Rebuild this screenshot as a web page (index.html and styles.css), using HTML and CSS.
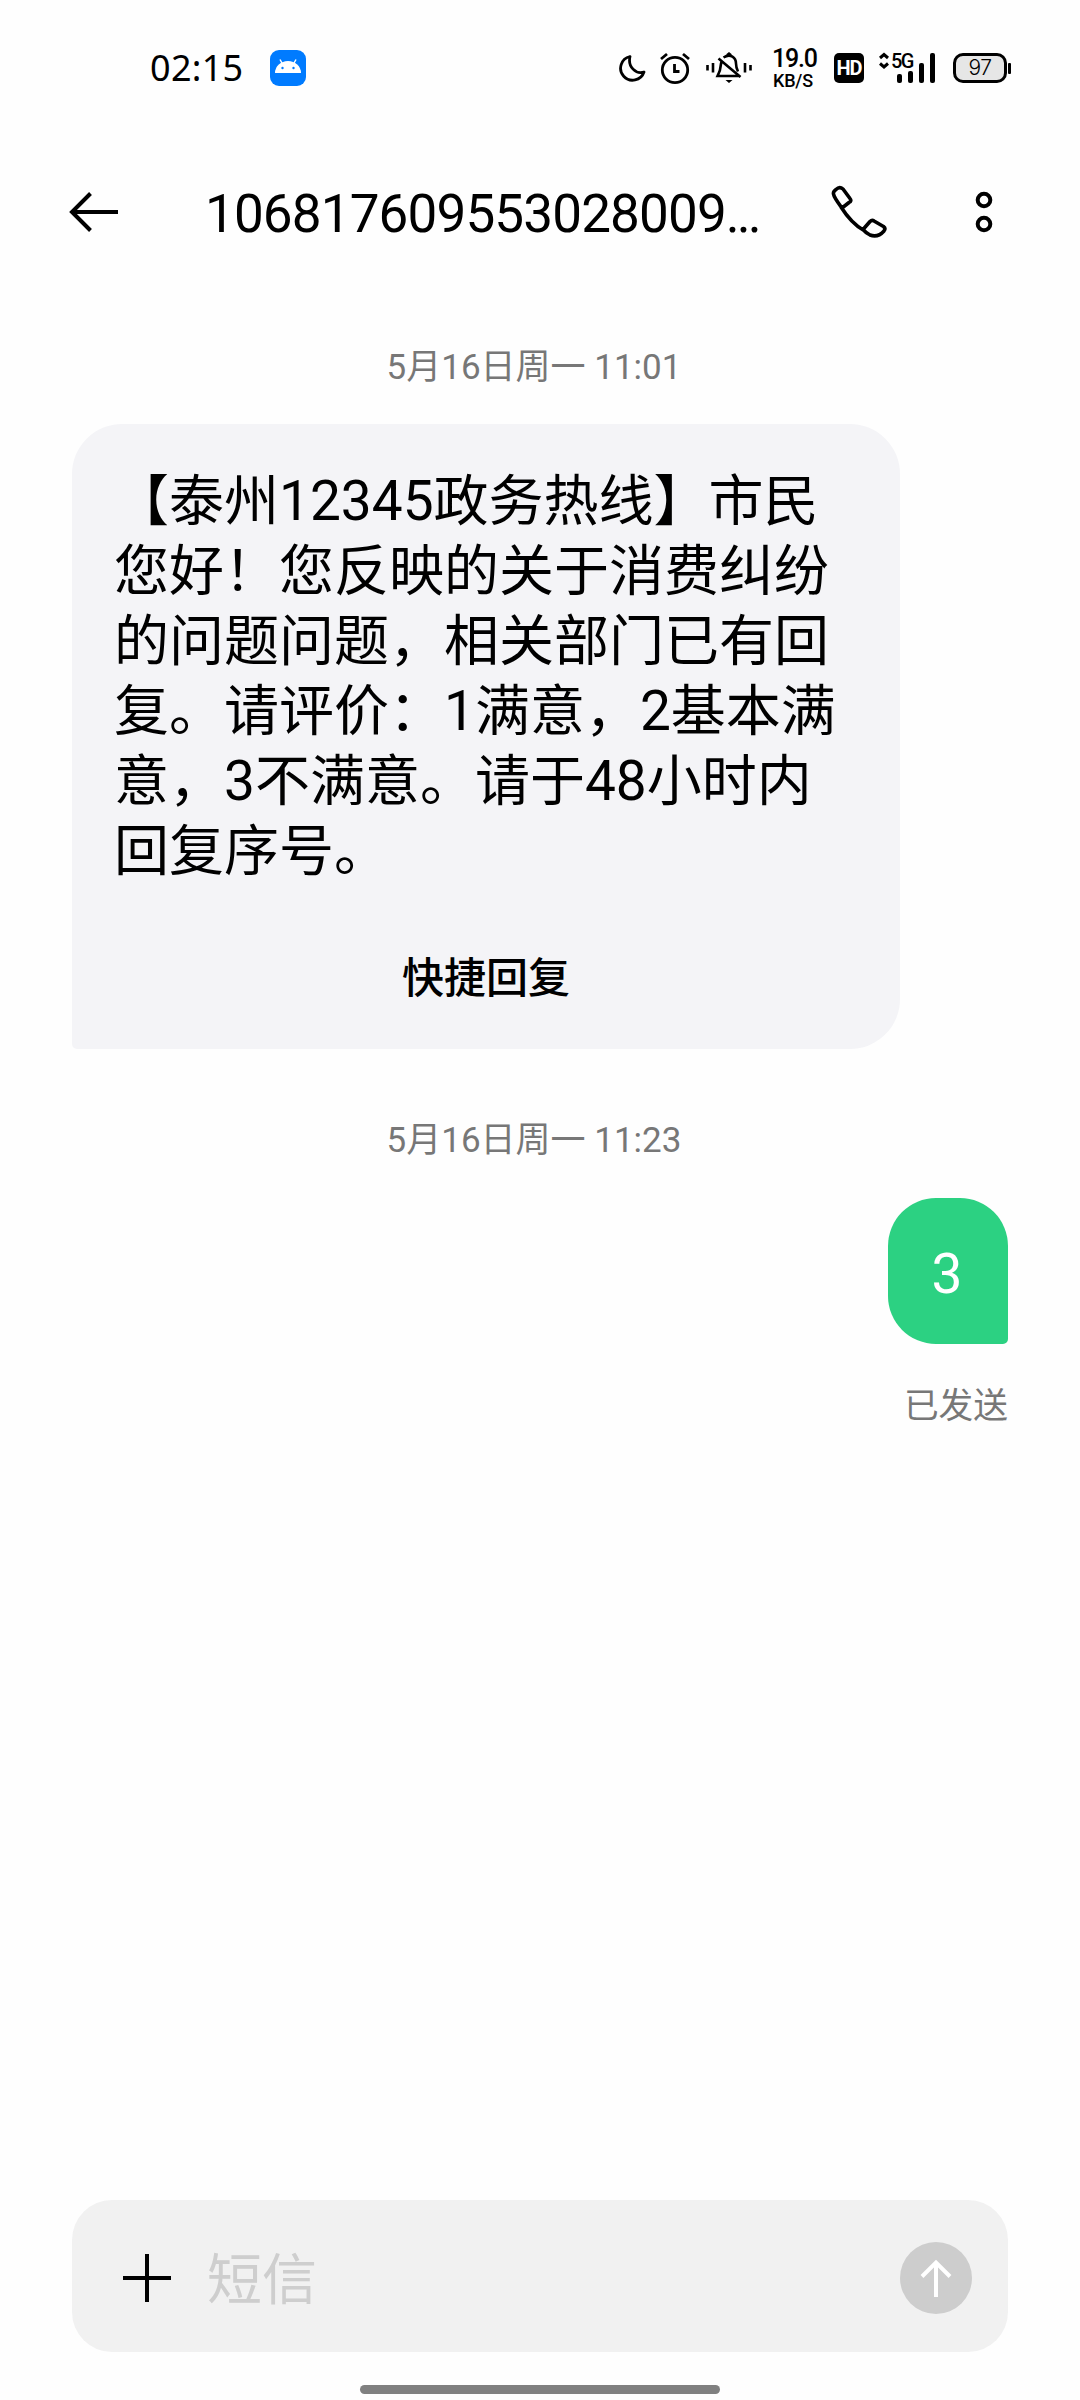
FILE: index.html
```html
<!DOCTYPE html>
<html lang="zh-CN">
<head>
<meta charset="utf-8">
<title>短信</title>
<link rel="stylesheet" href="styles.css">
</head>
<body>
<div class="screen">
  <div class="status">
    <span class="clock">02:15</span>
    <svg class="app" width="36" height="36" viewBox="0 0 36 36"><rect width="36" height="36" rx="9" fill="#007bff"/><path d="M5 23a13 12 0 0 1 26 0z" fill="#fff"/><path d="M12.500 14l-2.500-4.500M23.500 14l2.500-4.500" stroke="#fff" stroke-width="1.500"/><circle cx="12.500" cy="18" r="1.200" fill="#007bff"/><circle cx="23.500" cy="18" r="1.200" fill="#007bff"/></svg>
    <svg class="moon" width="28" height="30" viewBox="0 0 28 30" fill="none" stroke="#000" stroke-width="2.800" stroke-linejoin="round"><path d="M12 3.500A12 12 0 1 0 26 19C18 21.500 9.500 14 12 3.500z"/></svg>
    <svg class="alarm" width="30" height="34" viewBox="0 0 30 34" fill="none" stroke="#000" stroke-width="2.800"><circle cx="15" cy="19" r="12.700"/><path d="M14.500 13v7.500h5M1 8l6-5M29 8l-6-5"/></svg>
    <svg class="bell" width="46" height="32" viewBox="0 0 46 32" fill="none" stroke="#000" stroke-width="2.600"><path d="M1.500 13v5.500M7 11v9.500M39 11v9.500M44.500 13v5.500M16 8.500c-2 4-1 9-3 12L11.500 24h22M17.500 5.500c7-4.500 12.500 0 12.500 6 0 4 1 6 2 8M12.500 6.500l22 18.500"/><path d="M20.500 2l2.500-2 2.500 2v2h-5zM19.500 28h7l-3.500 3z" fill="#000" stroke="none"/></svg>
    <div class="speed"><span class="rate">19.0</span><span class="unit">KB/S</span></div>
    <span class="hd">HD</span>
    <div class="signal">
      <svg width="58" height="32" viewBox="0 0 58 32"><path d="M2 6l4-3.500L10 6M2 11.500l4 3.500 4-3.500" fill="none" stroke="#000" stroke-width="3"/><g fill="#000"><rect x="19" y="22" width="5" height="9" rx="2"/><rect x="30" y="19" width="5" height="12" rx="2"/><rect x="41" y="11" width="5" height="20" rx="2"/><rect x="52" y="1" width="5" height="30" rx="2"/></g></svg>
      <span class="gen">5G</span>
    </div>
    <div class="battery">97</div><i class="battery-tip"></i>
  </div>

  <div class="topbar">
    <svg class="back" width="50" height="42" viewBox="0 0 50 42" fill="none" stroke="#000" stroke-width="4"><path d="M49 21H3M21.500 2.500L3 21l18.500 18.500"/></svg>
    <span class="title">106817609553028009<span class="dots">...</span></span>
    <svg class="phone" width="56" height="54" viewBox="0 0 56 54" fill="none" stroke="#000" stroke-width="3.600" stroke-linejoin="round"><path d="M5 4.500Q8.500 1 12 4l7 9.500Q21 16 18 17.500L11 23C6.500 17 3 12.500 2.500 9Q2 6.500 5 4.500zM10 22C16 31.500 24 40.500 33 45.500M32 44.500l7-8Q41 34.500 43 36l9.500 5.500Q55 43.500 53 46C49 50.500 44 52 39 50Q35 48 32 44.500z"/></svg>
    <svg class="more" width="18" height="42" viewBox="0 0 18 42" fill="none" stroke="#000" stroke-width="4"><circle cx="9" cy="9" r="6.300"/><circle cx="9" cy="33" r="6.300"/></svg>
  </div>

  <div class="thread">
    <div class="date">5月16日周一 11:01</div>
    <div class="incoming">
      <p class="message">【泰州12345政务热线】市民您好！您反映的关于消费纠纷的问题问题，相关部门已有回复。请评价：1满意，2基本满意，3不满意。请于48小时内回复序号。</p>
      <div class="quick">快捷回复</div>
    </div>
    <div class="date later">5月16日周一 11:23</div>
    <div class="outgoing">3</div>
    <div class="sent">已发送</div>
  </div>

  <div class="composer">
    <svg width="48" height="48" viewBox="0 0 48 48" stroke="#000" stroke-width="4"><path d="M24 0v48M0 24h48"/></svg>
    <span class="placeholder">短信</span>
    <svg width="72" height="72" viewBox="0 0 72 72"><circle cx="36" cy="36" r="36" fill="#cdcdcd"/><path d="M36 55V20M22 34.500L36 20.500l14 14" fill="none" stroke="#fff" stroke-width="4"/></svg>
  </div>
  <div class="home"></div>
</div>
</body>
</html>
```
FILE: styles.css
```css
* { box-sizing: border-box; }
body {
  margin: 0;
  background: #fff;
  color: #000;
  font-family: Roboto, "Noto Sans CJK SC", sans-serif;
  text-spacing-trim: space-all;
}
svg { display: block; flex: none; }
.screen {
  width: 1080px;
  height: 2400px;
  display: flex;
  flex-direction: column;
  background: #fefefe;
  overflow: hidden;
}

/* Status bar */
.status {
  height: 136px;
  flex: none;
  display: flex;
  align-items: center;
  padding-left: 150px;
  font-family: "Noto Sans", sans-serif;
}
.clock { width: 120px; font-size: 36px; line-height: 40px; letter-spacing: 0.300px; }
.app { margin-right: 312px; }
.moon { margin-right: 14px; }
.alarm { margin-right: 16px; }
.bell { margin-right: 20px; }
.speed {
  width: 62px;
  display: flex;
  flex-direction: column;
  font-family: Roboto, sans-serif;
  font-weight: 500;
}
.rate { font-size: 25px; line-height: 24px; letter-spacing: -1.200px; }
.unit { font-size: 18px; line-height: 19px; padding-left: 1px; letter-spacing: -0.200px; }
.hd {
  width: 30px;
  height: 30px;
  border-radius: 5px;
  background: #000;
  color: #fff;
  font: 700 20px/30px Roboto, sans-serif;
  text-align: center;
  letter-spacing: -1px;
  margin-right: 14px;
}
.signal { position: relative; margin-right: 17px; }
.gen {
  position: absolute;
  left: 13px;
  top: 0;
  font: 500 20px/18px Roboto, sans-serif;
  letter-spacing: -1.500px;
}
.battery {
  width: 54px;
  height: 30px;
  border: 3px solid #000;
  border-radius: 10px;
  background: #e6e6e6;
  font: 300 21px/24px Inter, sans-serif;
  text-align: center;
  letter-spacing: -0.500px;
}
.battery-tip { width: 3px; height: 11px; margin-left: 1px; border-radius: 1px; background: #000; }

/* Title bar */
.topbar {
  height: 152px;
  flex: none;
  display: flex;
  align-items: center;
  padding-left: 69px;
}
.title {
  width: 625px;
  padding: 4px 0 0 86px;
  font-size: 53px;
  line-height: 60px;
  letter-spacing: -0.850px;
  white-space: nowrap;
}
.dots { letter-spacing: -3px; }
.phone { margin-left: 87px; }
.more { margin-left: 88px; }

/* Conversation */
.thread { flex: 1; display: flex; flex-direction: column; padding: 0 72px; }
.date {
  margin: 55px 12px 0 0;
  height: 50px;
  font-size: 35px;
  line-height: 50px;
  color: #777;
  text-align: center;
}
.incoming {
  width: 828px;
  height: 625px;
  margin-top: 31px;
  padding: 42px 42px 0;
  background: #f4f4f7;
  border-radius: 50px 50px 50px 5px;
}
.message { margin: 0; font-size: 55px; line-height: 70px; }
.quick { margin-top: 63px; font-size: 42px; line-height: 60px; font-weight: 500; text-align: center; }
.later { margin-top: 67px; }
.outgoing {
  align-self: flex-end;
  width: 120px;
  height: 146px;
  margin-top: 32px;
  padding-right: 2px;
  border-radius: 48px 48px 5px 48px;
  background: #2cd182;
  color: #fff;
  font-size: 55px;
  line-height: 152px;
  text-align: center;
}
.sent { align-self: flex-end; margin-top: 37px; font-size: 34.700px; line-height: 50px; color: #777; }

/* Composer */
.composer {
  height: 152px;
  flex: none;
  margin: 0 72px;
  padding: 0 36px 0 51px;
  display: flex;
  align-items: center;
  background: #f1f1f1;
  border-radius: 40px;
}
.composer svg { margin-top: 4px; }
.placeholder { flex: 1; padding: 7px 0 0 36px; font-size: 55px; line-height: 80px; color: #cecece; }
.home { width: 360px; height: 9px; margin: 33px auto 6px; flex: none; border-radius: 5px; background: #808080; }
```
